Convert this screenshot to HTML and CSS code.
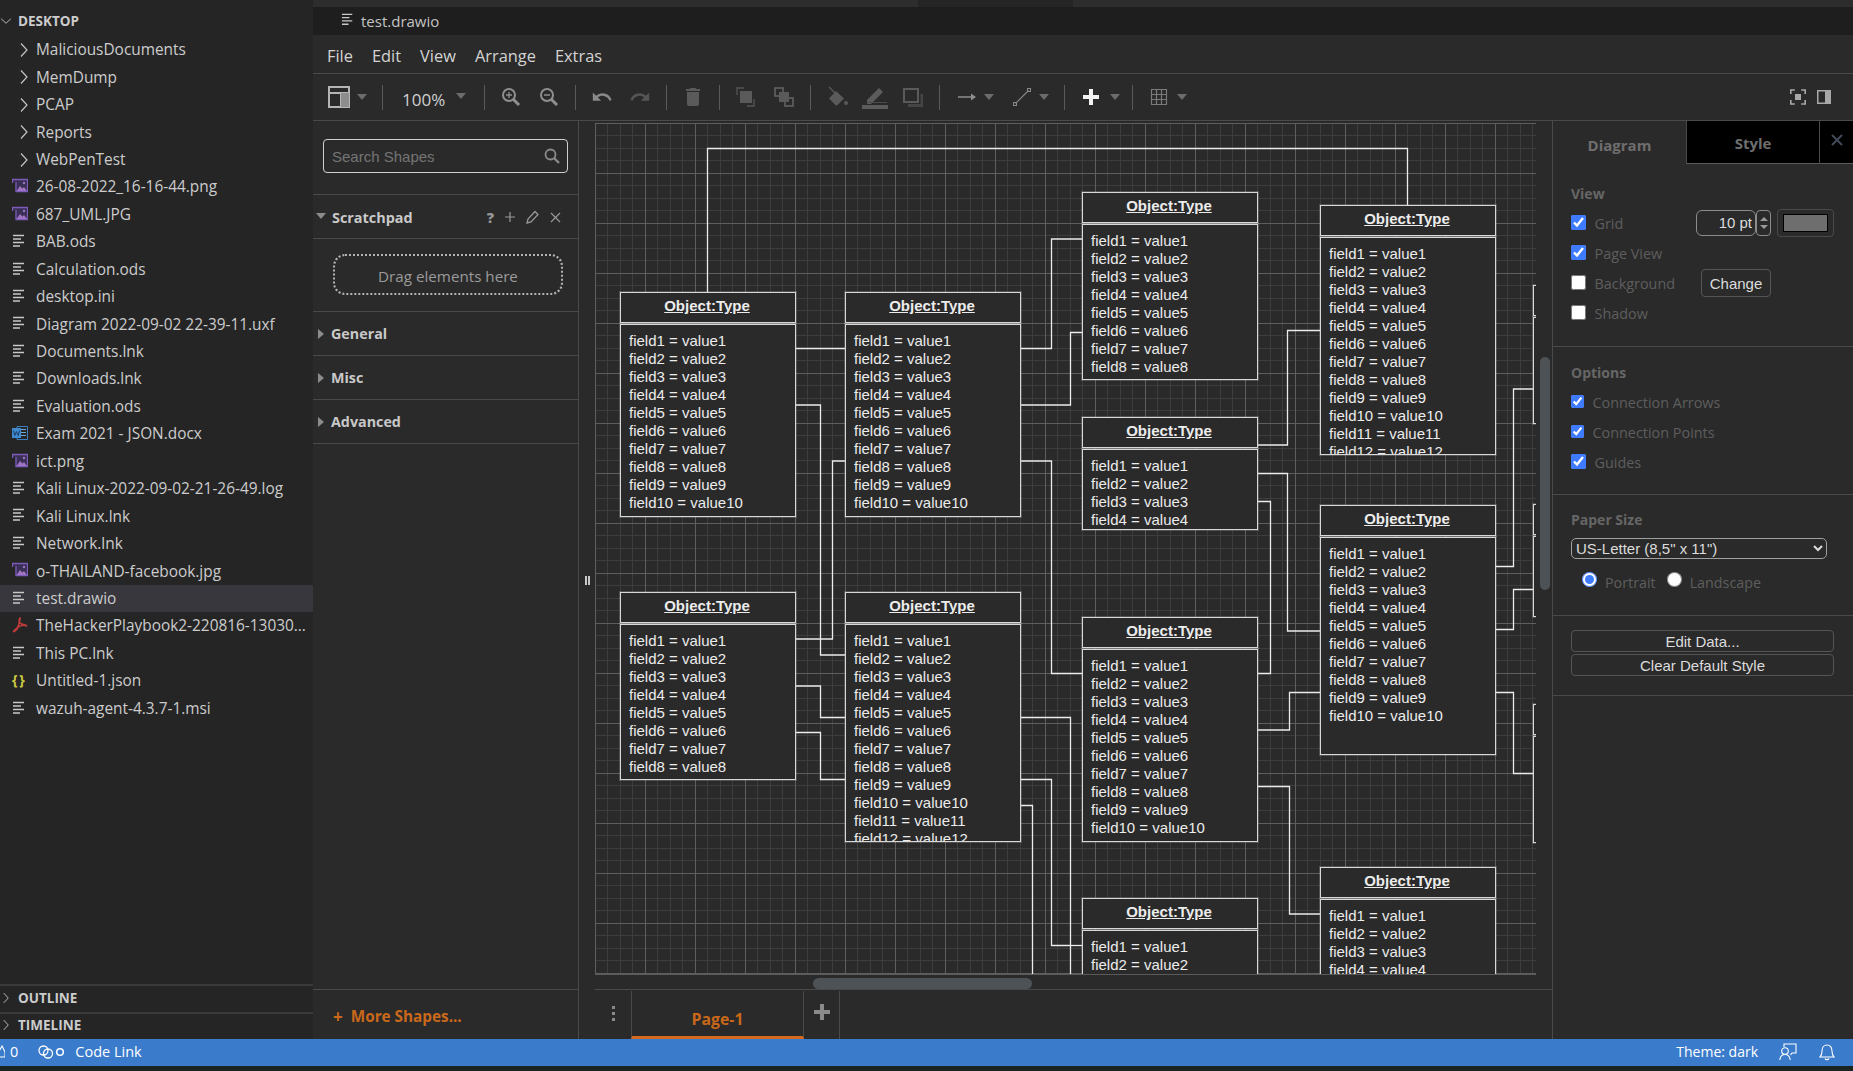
FILE: index.html
```html
<!DOCTYPE html>
<html lang="en">
<head>
  <meta charset="UTF-8" />
  <title>test.drawio - Visual Studio Code</title>
  <link rel="stylesheet" href="styles.css">
</head>
<body>
  <svg class="sprite" width="0" height="0">
    <symbol id="i-file" viewBox="0 0 16 16">
      <path d="M1 2.5h11M1 6h8M1 9.5h11M1 13h7" stroke="#c8c8c8" stroke-width="1.5" fill="none"/>
    </symbol>
    <symbol id="i-image" viewBox="0 0 16 16">
      <path d="M.5 1.5h15v12H3.5V4H.5z" fill="#3a2f55"/>
      <path d="M.5 5V1.5h15v12H4V4" stroke="#7d5bb8" stroke-width="1.3" fill="none"/>
      <path d="M4.5 13l3.5-5 2.5 2.5 1.5-1.5 3 4z" fill="#a074c4"/>
      <circle cx="12" cy="5" r="1.2" fill="#a074c4"/>
    </symbol>
    <symbol id="i-word" viewBox="0 0 16 16">
      <path d="M5 1.5h10.500v13H5z" fill="none" stroke="#3c7dbd"/>
      <path d="M9 4.5h5M9 7.5h5M9 10.5h5" stroke="#6ea6da"/>
      <rect x="0" y="3" width="9" height="10" fill="#3f8ad0"/>
      <path d="M1.5 5.5l1.3 5 1.7-4 1.7 4 1.3-5" stroke="#1d3f63" fill="none"/>
    </symbol>
    <symbol id="i-pdf" viewBox="0 0 16 16">
      <path d="M8 1c-1.5 0 0 5-2 8.5S1 13.5 1.5 14.5s3-1.5 4.500-4 7-2.500 8.500-1.500c.5-1.500-5.500-1-7-3.500C7 4 9 1 8 1z" fill="none" stroke="#c23b3b" stroke-width="1.5"/>
    </symbol>
    <symbol id="i-chev" viewBox="0 0 16 16">
      <path d="M5 1.5l6 6.500-6 6.500" stroke="#c5c5c5" stroke-width="1.2" fill="none"/>
    </symbol>
  </svg>

  <div class="app">
    <div class="main">

      <aside class="sidebar">
        <div class="explorer-head">
          <svg class="chev-down" viewBox="0 0 16 16"><path d="M1.5 5l6.500 6 6.500-6" stroke="#c5c5c5" stroke-width="1.2" fill="none"/></svg>
          <span>DESKTOP</span>
        </div>
        <div class="row"><svg class="chev"><use href="#i-chev"/></svg><span>MaliciousDocuments</span></div>
        <div class="row"><svg class="chev"><use href="#i-chev"/></svg><span>MemDump</span></div>
        <div class="row"><svg class="chev"><use href="#i-chev"/></svg><span>PCAP</span></div>
        <div class="row"><svg class="chev"><use href="#i-chev"/></svg><span>Reports</span></div>
        <div class="row"><svg class="chev"><use href="#i-chev"/></svg><span>WebPenTest</span></div>
        <div class="row"><svg class="ficon"><use href="#i-image"/></svg><span>26-08-2022_16-16-44.png</span></div>
        <div class="row"><svg class="ficon"><use href="#i-image"/></svg><span>687_UML.JPG</span></div>
        <div class="row"><svg class="ficon"><use href="#i-file"/></svg><span>BAB.ods</span></div>
        <div class="row"><svg class="ficon"><use href="#i-file"/></svg><span>Calculation.ods</span></div>
        <div class="row"><svg class="ficon"><use href="#i-file"/></svg><span>desktop.ini</span></div>
        <div class="row"><svg class="ficon"><use href="#i-file"/></svg><span>Diagram 2022-09-02 22-39-11.uxf</span></div>
        <div class="row"><svg class="ficon"><use href="#i-file"/></svg><span>Documents.lnk</span></div>
        <div class="row"><svg class="ficon"><use href="#i-file"/></svg><span>Downloads.lnk</span></div>
        <div class="row"><svg class="ficon"><use href="#i-file"/></svg><span>Evaluation.ods</span></div>
        <div class="row"><svg class="ficon"><use href="#i-word"/></svg><span>Exam 2021 - JSON.docx</span></div>
        <div class="row"><svg class="ficon"><use href="#i-image"/></svg><span>ict.png</span></div>
        <div class="row"><svg class="ficon"><use href="#i-file"/></svg><span>Kali Linux-2022-09-02-21-26-49.log</span></div>
        <div class="row"><svg class="ficon"><use href="#i-file"/></svg><span>Kali Linux.lnk</span></div>
        <div class="row"><svg class="ficon"><use href="#i-file"/></svg><span>Network.lnk</span></div>
        <div class="row"><svg class="ficon"><use href="#i-image"/></svg><span>o-THAILAND-facebook.jpg</span></div>
        <div class="row selected"><svg class="ficon"><use href="#i-file"/></svg><span>test.drawio</span></div>
        <div class="row"><svg class="ficon"><use href="#i-pdf"/></svg><span>TheHackerPlaybook2-220816-13030...</span></div>
        <div class="row"><svg class="ficon"><use href="#i-file"/></svg><span>This PC.lnk</span></div>
        <div class="row"><span class="json-icon">{ }</span><span>Untitled-1.json</span></div>
        <div class="row"><svg class="ficon"><use href="#i-file"/></svg><span>wazuh-agent-4.3.7-1.msi</span></div>

        <div class="side-section first"><svg class="chev-s"><use href="#i-chev"/></svg>OUTLINE</div>
        <div class="side-section"><svg class="chev-s"><use href="#i-chev"/></svg>TIMELINE</div>
      </aside>

      <div class="editor">
        <div class="tabstrip">
          <div class="strip-a"></div>
          <div class="strip-b"></div>
          <div class="strip-c"></div>
        </div>
        <div class="crumb">
          <svg class="ficon"><use href="#i-file"/></svg>
          <span>test.drawio</span>
        </div>
        <nav class="menubar">
          <span>File</span><span>Edit</span><span>View</span><span>Arrange</span><span>Extras</span>
        </nav>

        <div class="toolbar">
          <div class="tb-drop tb-first">
            <svg width="24" height="24" viewBox="0 0 24 24"><rect x="2" y="2" width="20" height="20" fill="none" stroke="#b5b5b5" stroke-width="2"/><path d="M2 8h20M14 8v14" stroke="#b5b5b5" stroke-width="2"/><rect x="14" y="8" width="8" height="14" fill="#8d8d8d"/></svg>
            <i class="caret"></i>
          </div>
          <i class="sep"></i>
          <div class="tb-zoom"><span>100%</span><i class="caret"></i></div>
          <i class="sep"></i>
          <div class="tb-btn"><svg width="20" height="20" viewBox="0 0 20 20"><circle cx="8" cy="8" r="6" fill="none" stroke="#8f8f8f" stroke-width="2"/><path d="M12.5 12.5l5.5 5.5" stroke="#8f8f8f" stroke-width="3"/><path d="M5 8h6M8 5v6" stroke="#8f8f8f" stroke-width="1.3"/></svg></div>
          <div class="tb-btn"><svg width="20" height="20" viewBox="0 0 20 20"><circle cx="8" cy="8" r="6" fill="none" stroke="#8f8f8f" stroke-width="2"/><path d="M12.5 12.5l5.5 5.5" stroke="#8f8f8f" stroke-width="3"/><path d="M5 8h6" stroke="#8f8f8f" stroke-width="1.5"/></svg></div>
          <i class="sep"></i>
          <div class="tb-btn"><svg width="22" height="22" viewBox="0 0 24 24"><path fill="#8a8a8a" d="M12.5 8c-2.65 0-5.05.99-6.9 2.6L2 7v9h9l-3.62-3.62c1.39-1.16 3.16-1.88 5.12-1.88 3.54 0 6.55 2.31 7.6 5.5l2.37-.78C21.08 11.03 17.15 8 12.5 8z"/></svg></div>
          <div class="tb-btn"><svg width="22" height="22" viewBox="0 0 24 24"><path fill="#555" d="M18.4 10.6C16.55 8.99 14.15 8 11.5 8c-4.65 0-8.58 3.03-9.96 7.22L3.9 16c1.05-3.19 4.05-5.5 7.6-5.5 1.95 0 3.73.72 5.12 1.88L13 16h9V7l-3.6 3.6z"/></svg></div>
          <i class="sep"></i>
          <div class="tb-btn"><svg width="24" height="24" viewBox="0 0 24 24"><path fill="#5a5a5a" d="M6 19c0 1.1.9 2 2 2h8c1.1 0 2-.9 2-2V7H6v12zM19 4h-3.5l-1-1h-5l-1 1H5v2h14V4z"/></svg></div>
          <i class="sep"></i>
          <div class="tb-btn"><svg width="20" height="20" viewBox="0 0 20 20"><path d="M1 8V1h7M11 19h7v-7" fill="none" stroke="#555" stroke-width="1.3"/><rect x="4" y="4" width="12" height="12" fill="#5a5a5a"/></svg></div>
          <div class="tb-btn"><svg width="20" height="20" viewBox="0 0 20 20"><rect x="1" y="1" width="8" height="8" fill="none" stroke="#666" stroke-width="1.5"/><rect x="11" y="11" width="8" height="8" fill="none" stroke="#666" stroke-width="1.5"/><rect x="5" y="5" width="10" height="10" fill="#5a5a5a"/></svg></div>
          <i class="sep"></i>
          <div class="tb-btn"><svg width="22" height="22" viewBox="0 0 22 22"><path fill="#5a5a5a" d="M10 5l8 7.5-6.5 6.5a1.5 1.5 0 0 1-2.1 0L3 12.5z"/><path d="M3 1l8 8" stroke="#5a5a5a" stroke-width="1.2"/><circle cx="20" cy="17" r="2" fill="#5a5a5a"/></svg></div>
          <div class="tb-btn"><svg width="26" height="24" viewBox="0 0 26 24"><path fill="#5c5c5c" d="M5 15l12-12 4 4-12 12H5z"/><rect x="0" y="20" width="26" height="4" fill="#5c5c5c"/><path d="M5 17.5h20" stroke="#4a4a4a"/></svg></div>
          <div class="tb-btn"><svg width="20" height="20" viewBox="0 0 20 20"><path d="M5 18.5h14V7" fill="none" stroke="#454545" stroke-width="3"/><rect x="1" y="2" width="14" height="13" fill="#2a2a2a" stroke="#5a5a5a" stroke-width="2"/></svg></div>
          <i class="sep"></i>
          <div class="tb-drop">
            <svg width="20" height="12" viewBox="0 0 20 12"><path d="M1 6h15" stroke="#8f8f8f" stroke-width="1.5"/><path d="M14 2.5l5 3.5-5 3.500z" fill="#8f8f8f"/></svg>
            <i class="caret"></i>
          </div>
          <div class="tb-drop">
            <svg width="20" height="20" viewBox="0 0 20 20"><path d="M3.5 16.5l13-13" stroke="#888" stroke-width="1.2"/><rect x="1.5" y="15.5" width="3" height="3" fill="none" stroke="#888"/><rect x="15.5" y="1.5" width="3" height="3" fill="none" stroke="#888"/></svg>
            <i class="caret"></i>
          </div>
          <i class="sep"></i>
          <div class="tb-drop tb-plus">
            <svg width="18" height="18" viewBox="0 0 18 18"><path d="M9 1v16M1 9h16" stroke="#f2f2f2" stroke-width="4"/></svg>
            <i class="caret"></i>
          </div>
          <i class="sep"></i>
          <div class="tb-drop tb-table">
            <svg width="18" height="18" viewBox="0 0 18 18"><path d="M1.5 1.5h15v15h-15zM6.5 1.5v15M11.5 1.500v15M1.5 6.5h15M1.5 11.5h15" fill="none" stroke="#7a7a7a" stroke-width="1.2"/></svg>
            <i class="caret"></i>
          </div>
          <div class="tb-right">
            <svg width="16" height="16" viewBox="0 0 16 16"><path d="M.8 5V1h4M11.2 1h4v4M15.2 11v4h-4M4.8 15h-4v-4" fill="none" stroke="#a8a8a8" stroke-width="1.6"/><rect x="5" y="5" width="6" height="6" fill="#a8a8a8"/></svg>
            <svg width="14" height="14" viewBox="0 0 14 14"><rect x=".75" y=".75" width="12.5" height="12.5" fill="none" stroke="#a8a8a8" stroke-width="1.5"/><rect x="8" y="1" width="5" height="12" fill="#a8a8a8"/></svg>
          </div>
        </div>

        <div class="workspace">
          <section class="shapes">
            <div class="search-wrap">
              <div class="search">
                <span>Search Shapes</span>
                <svg width="16" height="16" viewBox="0 0 16 16"><circle cx="6.5" cy="6.5" r="5" fill="none" stroke="#8a8a8a" stroke-width="1.8"/><path d="M10 10l5 5" stroke="#8a8a8a" stroke-width="2.4"/></svg>
              </div>
            </div>
            <div class="pad-head">
              <i class="tri-down"></i>
              <span class="pad-title">Scratchpad</span>
              <span class="pad-tools">
                <b>?</b>
                <svg width="12" height="12" viewBox="0 0 12 12"><path d="M6 1v10M1 6h10" stroke="#999" stroke-width="1.2"/></svg>
                <svg width="14" height="14" viewBox="0 0 14 14"><path d="M1 13l1-4 7-7.5 3 3L5 12z" fill="none" stroke="#999" stroke-width="1.3"/></svg>
                <svg width="11" height="11" viewBox="0 0 11 11"><path d="M1 1l9 9M10 1l-9 9" stroke="#999" stroke-width="1.2"/></svg>
              </span>
            </div>
            <div class="pad-body"><div class="dropzone">Drag elements here</div></div>
            <div class="group"><i class="tri-right"></i>General</div>
            <div class="group"><i class="tri-right"></i>Misc</div>
            <div class="group"><i class="tri-right"></i>Advanced</div>
            <div class="more-shapes"><span class="more-plus">+</span>More Shapes...</div>
          </section>

          <div class="splitter"><i></i><i></i></div>

          <section class="center">
            <div class="canvas-wrap">
              <div class="grid">
                <svg class="links" width="941" height="851" viewBox="595 123 941 851">
                  <g fill="none" stroke="#ececec" stroke-width="1.3">
                    <path d="M707.5 292V148.5H1407.5V205"/>
                    <path d="M795 348.5H845"/>
                    <path d="M795 405H820.5V655H845"/>
                    <path d="M845 461H832.5V639H795"/>
                    <path d="M1020 348.5H1051.5V239H1082"/>
                    <path d="M1020 405H1070.5V332.5H1082"/>
                    <path d="M1020 461H1051.5V673.5H1082"/>
                    <path d="M795 686H820.5V717.5H845"/>
                    <path d="M795 732.5H820.5V779.5H845"/>
                    <path d="M1020 717.5H1070.5V974"/>
                    <path d="M1070.5 945.5H1082"/>
                    <path d="M1020 779.5H1051.5V945.5H1070"/>
                    <path d="M1020 805.5H1032.5V974"/>
                    <path d="M1258 445H1287.5V330.5H1320"/>
                    <path d="M1258 473.5H1287.5V631H1320"/>
                    <path d="M1258 501.5H1270.5V673.5H1258"/>
                    <path d="M1258 730H1289.5V692.5H1320"/>
                    <path d="M1258 786.5H1289.5V914H1320"/>
                    <path d="M1495 566.5H1513.5V389H1533"/>
                    <path d="M1495 629.5H1513.5V589.5H1533"/>
                    <path d="M1495 692.5H1513.5V773.5H1533"/>
                  </g>
                </svg>

                <div class="node node-a">
                  <div class="node-title">Object:Type</div>
                  <div class="node-body">field1 = value1<br>field2 = value2<br>field3 = value3<br>field4 = value4<br>field5 = value5<br>field6 = value6<br>field7 = value7<br>field8 = value8<br>field9 = value9<br>field10 = value10</div>
                </div>
                <div class="node node-b">
                  <div class="node-title">Object:Type</div>
                  <div class="node-body">field1 = value1<br>field2 = value2<br>field3 = value3<br>field4 = value4<br>field5 = value5<br>field6 = value6<br>field7 = value7<br>field8 = value8<br>field9 = value9<br>field10 = value10</div>
                </div>
                <div class="node node-c">
                  <div class="node-title">Object:Type</div>
                  <div class="node-body">field1 = value1<br>field2 = value2<br>field3 = value3<br>field4 = value4<br>field5 = value5<br>field6 = value6<br>field7 = value7<br>field8 = value8</div>
                </div>
                <div class="node node-d">
                  <div class="node-title">Object:Type</div>
                  <div class="node-body">field1 = value1<br>field2 = value2<br>field3 = value3<br>field4 = value4<br>field5 = value5<br>field6 = value6<br>field7 = value7<br>field8 = value8<br>field9 = value9<br>field10 = value10<br>field11 = value11<br>field12 = value12</div>
                </div>
                <div class="node node-e">
                  <div class="node-title">Object:Type</div>
                  <div class="node-body">field1 = value1<br>field2 = value2<br>field3 = value3<br>field4 = value4<br>field5 = value5<br>field6 = value6<br>field7 = value7<br>field8 = value8</div>
                </div>
                <div class="node node-f">
                  <div class="node-title">Object:Type</div>
                  <div class="node-body">field1 = value1<br>field2 = value2<br>field3 = value3<br>field4 = value4</div>
                </div>
                <div class="node node-g">
                  <div class="node-title">Object:Type</div>
                  <div class="node-body">field1 = value1<br>field2 = value2<br>field3 = value3<br>field4 = value4<br>field5 = value5<br>field6 = value6<br>field7 = value7<br>field8 = value8<br>field9 = value9<br>field10 = value10</div>
                </div>
                <div class="node node-h">
                  <div class="node-title">Object:Type</div>
                  <div class="node-body">field1 = value1<br>field2 = value2</div>
                </div>
                <div class="node node-i">
                  <div class="node-title">Object:Type</div>
                  <div class="node-body">field1 = value1<br>field2 = value2<br>field3 = value3<br>field4 = value4<br>field5 = value5<br>field6 = value6<br>field7 = value7<br>field8 = value8<br>field9 = value9<br>field10 = value10<br>field11 = value11<br>field12 = value12</div>
                </div>
                <div class="node node-j">
                  <div class="node-title">Object:Type</div>
                  <div class="node-body">field1 = value1<br>field2 = value2<br>field3 = value3<br>field4 = value4<br>field5 = value5<br>field6 = value6<br>field7 = value7<br>field8 = value8<br>field9 = value9<br>field10 = value10</div>
                </div>
                <div class="node node-k">
                  <div class="node-title">Object:Type</div>
                  <div class="node-body">field1 = value1<br>field2 = value2<br>field3 = value3<br>field4 = value4</div>
                </div>
                <div class="node node-l"><div class="node-title"></div><div class="node-body"></div></div>
                <div class="node node-m"><div class="node-title"></div><div class="node-body"></div></div>
                <div class="node node-n"><div class="node-title"></div><div class="node-body"></div></div>
              </div>
              <div class="vscroll"></div>
              <div class="hscroll"></div>
            </div>

            <div class="pages">
              <div class="page-dots"><i></i><i></i><i></i></div>
              <div class="page-tab">Page-1</div>
              <div class="page-add"><svg width="16" height="16" viewBox="0 0 16 16"><path d="M8 0v16M0 8h16" stroke="#8a8a8a" stroke-width="4"/></svg></div>
            </div>
          </section>

          <section class="format">
            <div class="format-tabs">
              <div class="ftab">Diagram</div>
              <div class="ftab active">Style</div>
              <div class="ftab-close"><svg width="12" height="12" viewBox="0 0 12 12"><path d="M1 1l10 10M11 1L1 11" stroke="#404a58" stroke-width="2"/></svg></div>
            </div>

            <div class="fsec fsec-view">
              <div class="fsec-title">View</div>
              <div class="frow">
                <label class="fcheck"><input type="checkbox" checked>Grid</label>
                <div class="pt-input">10 pt</div>
                <div class="spinner"><i class="up"></i><i class="down"></i></div>
                <div class="swatch"><i></i></div>
              </div>
              <div class="frow"><label class="fcheck"><input type="checkbox" checked>Page View</label></div>
              <div class="frow">
                <label class="fcheck"><input type="checkbox">Background</label>
                <button class="btn-change">Change</button>
              </div>
              <div class="frow"><label class="fcheck"><input type="checkbox">Shadow</label></div>
            </div>

            <div class="fsec fsec-options">
              <div class="fsec-title">Options</div>
              <div class="frow"><label class="fcheck"><input type="checkbox" checked>Connection Arrows</label></div>
              <div class="frow"><label class="fcheck"><input type="checkbox" checked>Connection Points</label></div>
              <div class="frow"><label class="fcheck"><input type="checkbox" checked>Guides</label></div>
            </div>

            <div class="fsec fsec-paper">
              <div class="fsec-title">Paper Size</div>
              <select class="paper-select"><option>US-Letter (8,5" x 11")</option></select>
              <div class="radios">
                <label class="fradio"><input type="radio" name="orient" checked>Portrait</label>
                <label class="fradio"><input type="radio" name="orient">Landscape</label>
              </div>
            </div>

            <div class="fsec fsec-actions">
              <button class="btn-wide">Edit Data...</button>
              <button class="btn-wide">Clear Default Style</button>
            </div>
          </section>
        </div>
      </div>
    </div>

    <footer class="statusbar">
      <div class="st-left">
        <svg class="st-warn" width="5" height="13" viewBox="0 0 5 13"><path d="M-4 12L2 1l3 6v5z" fill="none" stroke="#fff" stroke-width="1.1"/></svg>
        <span class="st-zero">0</span>
        <svg class="st-link" width="28" height="14" viewBox="0 0 28 14"><circle cx="5.5" cy="5.5" r="4.5" fill="none" stroke="#fff" stroke-width="1.3"/><circle cx="10" cy="8.5" r="4.5" fill="none" stroke="#fff" stroke-width="1.3"/><circle cx="22" cy="7" r="3.3" fill="none" stroke="#fff" stroke-width="1.5"/></svg>
        <span>Code Link</span>
      </div>
      <div class="st-right">
        <span>Theme: dark</span>
        <svg class="st-feedback" width="18" height="18" viewBox="0 0 18 18"><path d="M5 4V1h12v9h-4l-1.500 2" fill="none" stroke="#fff" stroke-width="1.1"/><circle cx="6" cy="8" r="3.3" fill="none" stroke="#fff" stroke-width="1.1"/><path d="M.8 17c.4-3.5 2.5-5.5 5.2-5.5s4.800 2 5.200 5.500" fill="none" stroke="#fff" stroke-width="1.1"/></svg>
        <svg class="st-bell" width="16" height="18" viewBox="0 0 16 18"><path d="M1 14c1.500-1.500 2-3 2-6 0-3.500 2-6 5-6s5 2.500 5 6c0 3 .5 4.500 2 6z" fill="none" stroke="#fff" stroke-width="1.1"/><path d="M6 15.5c.5 1.500 3.500 1.500 4 0" fill="none" stroke="#fff" stroke-width="1.1"/></svg>
      </div>
    </footer>
    <div class="bottom-edge"></div>
  </div>
</body>
</html>
```

FILE: styles.css
```css
* {
  box-sizing: border-box;
}

html, body {
  height: 100%;
  margin: 0;
  background: #2a2a2a;
  overflow: hidden;
  font-family: 'Open Sans', 'Noto Sans', sans-serif;
}

.sprite {
  position: absolute;
}

.app {
  display: flex;
  flex-direction: column;
  width: 1853px;
  height: 1071px;
}

.main {
  display: flex;
  flex: 1;
  min-height: 0;
}

/* explorer */
.sidebar {
  display: flex;
  flex-direction: column;
  width: 313px;
  background: #252526;
  color: #cccccc;
  font-size: 15.4px;
}

.explorer-head {
  display: flex;
  align-items: center;
  height: 36px;
  padding: 6px 0 0 0;
  font-size: 13.5px;
  font-weight: 700;
}

.chev-down {
  width: 12px;
  height: 12px;
  margin-right: 6px;
}

.row {
  display: flex;
  align-items: center;
  flex: 0 0 27.45px;
  padding-left: 36px;
  position: relative;
  white-space: nowrap;
}

.row.selected {
  background: #37373d;
}

.chev {
  position: absolute;
  left: 16px;
  top: 6px;
  width: 16px;
  height: 16px;
}

.ficon {
  position: absolute;
  left: 12px;
  top: 5px;
  width: 16px;
  height: 16px;
}

.json-icon {
  position: absolute;
  left: 12px;
  top: 3px;
  color: #cbcb41;
  font-size: 14px;
  font-weight: 700;
  letter-spacing: -1px;
}

.side-section {
  display: flex;
  align-items: center;
  height: 27.5px;
  padding-bottom: 2px;
  border-top: 2px solid #3a3a3b;
  font-size: 13.5px;
  font-weight: 700;
}

.side-section.first {
  margin-top: auto;
}

.chev-s {
  width: 12px;
  height: 16px;
  margin-right: 6px;
}

/* editor chrome */
.editor {
  display: flex;
  flex-direction: column;
  flex: 1;
  min-width: 0;
  background: #2a2a2a;
}

.tabstrip {
  display: flex;
  height: 7px;
}

.strip-a {
  width: 605px;
  background: #2d2d2d;
}

.strip-b {
  width: 155px;
  background: #252526;
}

.strip-c {
  flex: 1;
  background: #2d2d2d;
}

.crumb {
  position: relative;
  display: flex;
  align-items: center;
  height: 28px;
  padding-left: 48px;
  background: #1e1e1e;
  color: #c4c4c4;
  font-size: 15px;
}

.crumb .ficon {
  left: 28px;
  top: 5px;
  width: 15px;
  height: 15px;
}

.menubar {
  display: flex;
  align-items: center;
  gap: 19px;
  height: 39px;
  padding: 2px 0 0 14px;
  border-bottom: 1px solid #4a4a4a;
  color: #d4d4d4;
  font-size: 16.4px;
}

.toolbar {
  display: flex;
  align-items: center;
  height: 47px;
  padding-left: 7px;
  border-bottom: 1px solid #4a4a4a;
}

.sep {
  flex: 0 0 15px;
  height: 25px;
  background: linear-gradient(#5a5a5a, #5a5a5a) center / 1px 100% no-repeat;
}

.caret {
  display: block;
  width: 0;
  height: 0;
  border-left: 5.5px solid transparent;
  border-right: 5.5px solid transparent;
  border-top: 6px solid #6c6c6c;
}

.tb-btn {
  display: flex;
  align-items: center;
  justify-content: center;
  flex: 0 0 38px;
}

.tb-drop {
  display: flex;
  align-items: center;
  flex: 0 0 55px;
  gap: 7px;
  padding-left: 10px;
}

.tb-first {
  padding-left: 7px;
  gap: 6px;
}

.tb-plus {
  flex-basis: 53px;
  gap: 10px;
}

.tb-table {
  gap: 9px;
}

.tb-zoom {
  display: flex;
  align-items: center;
  flex: 0 0 87px;
  gap: 11px;
  padding: 5px 0 0 12px;
  color: #d0d0d0;
  font-size: 17px;
}

.tb-zoom .caret {
  margin-top: -7px;
}

.tb-right {
  display: flex;
  align-items: center;
  gap: 11px;
  margin-left: auto;
  padding-right: 22px;
}

/* body of the drawio window */
.workspace {
  display: flex;
  flex: 1;
  min-height: 0;
}

.shapes {
  display: flex;
  flex-direction: column;
  flex: 0 0 265px;
}

.search-wrap {
  height: 74px;
  padding: 18px 10px 0;
  border-bottom: 1px solid #4a4a4a;
}

.search {
  display: flex;
  align-items: center;
  justify-content: space-between;
  height: 34px;
  padding: 0 7px 0 8px;
  border: 1px solid #cfcfcf;
  border-radius: 4px;
  color: #757575;
  font-family: 'Liberation Sans', Arial, sans-serif;
  font-size: 15px;
}

.pad-head {
  display: flex;
  align-items: center;
  height: 44px;
  padding: 1px 0 0 3px;
  border-bottom: 1px solid #4a4a4a;
  color: #c8c8c8;
  font-size: 14.4px;
  font-weight: 700;
}

.tri-down {
  width: 0;
  height: 0;
  margin: -2px 6px 0 0;
  border-left: 5px solid transparent;
  border-right: 5px solid transparent;
  border-top: 6px solid #8c8c8c;
}

.pad-tools {
  display: flex;
  align-items: center;
  gap: 10px;
  margin-left: auto;
  padding-right: 17px;
  color: #999;
}

.pad-body {
  height: 73px;
  padding: 15px 15px 0 20px;
  border-bottom: 1px solid #4a4a4a;
}

.dropzone {
  display: flex;
  align-items: center;
  justify-content: center;
  height: 41px;
  padding-top: 2px;
  border: 2px dotted #b4b4b4;
  border-radius: 12px;
  color: #9a9a9a;
  font-size: 15.2px;
}

.group {
  display: flex;
  align-items: center;
  height: 44px;
  padding-left: 5px;
  border-bottom: 1px solid #4a4a4a;
  color: #c8c8c8;
  font-size: 14.3px;
  font-weight: 700;
}

.tri-right {
  width: 0;
  height: 0;
  margin-right: 7px;
  border-top: 5px solid transparent;
  border-bottom: 5px solid transparent;
  border-left: 6px solid #8c8c8c;
}

.more-shapes {
  display: flex;
  align-items: center;
  height: 50px;
  margin-top: auto;
  padding: 3px 0 0 20px;
  border-top: 1px solid #4a4a4a;
  color: #c9681a;
  font-size: 15.3px;
  font-weight: 700;
}

.more-plus {
  margin-right: 8px;
  font-size: 17px;
}

.splitter {
  display: flex;
  align-items: center;
  justify-content: center;
  gap: 1px;
  flex: 0 0 17px;
  border-left: 1px solid #4a4a4a;
}

.splitter i {
  width: 2px;
  height: 9px;
  background: #c8c8c8;
}

/* canvas */
.center {
  display: flex;
  flex-direction: column;
  flex: 0 0 957px;
  min-width: 0;
}

.canvas-wrap {
  position: relative;
  flex: 1;
  padding-top: 2px;
  border-bottom: 1px solid #4a4a4a;
}

.grid {
  position: relative;
  width: 941px;
  height: 852px;
  overflow: hidden;
  border-bottom: 1px solid #5a5a5a;
  background-color: #2a2a2a;
  background-image:
    linear-gradient(to right, #5e5e5e 1px, transparent 1px),
    linear-gradient(to bottom, #5e5e5e 1px, transparent 1px),
    linear-gradient(to right, #3d3d3d 1px, transparent 1px 12px, #3d3d3d 12px 13px, transparent 13px 25px, #3d3d3d 25px 26px, transparent 26px 37px, #3d3d3d 37px 38px, transparent 38px),
    linear-gradient(to bottom, #3d3d3d 1px, transparent 1px 12px, #3d3d3d 12px 13px, transparent 13px 25px, #3d3d3d 25px 26px, transparent 26px 37px, #3d3d3d 37px 38px, transparent 38px);
  background-size: 50px 50px;
}

.links {
  position: absolute;
  left: 0;
  top: 0;
}

.vscroll {
  position: absolute;
  left: 945px;
  top: 236px;
  width: 10px;
  height: 233px;
  border-radius: 5px;
  background: #4d5257;
}

.hscroll {
  position: absolute;
  left: 218px;
  top: 857px;
  width: 219px;
  height: 11px;
  border-radius: 6px;
  background: #4d5257;
}

.node {
  position: absolute;
  display: flex;
  flex-direction: column;
  gap: 1px;
  width: 176px;
  color: #ececec;
  font-family: 'Liberation Sans', Arial, sans-serif;
  font-size: 15px;
  line-height: 18px;
}

.node-title {
  flex: 0 0 31px;
  padding: 4px 2px 0 0;
  border: 1px solid #d8d8d8;
  box-shadow: 0 0 0 1px rgba(200, 200, 200, 0.25);
  background: #2a2a2a;
  font-weight: 700;
  text-align: center;
  text-decoration: underline;
}

.node-body {
  flex: 1;
  min-height: 0;
  overflow: hidden;
  padding: 7px 0 0 8px;
  border: 1px solid #d8d8d8;
  box-shadow: 0 0 0 1px rgba(200, 200, 200, 0.25);
  background: #2a2a2a;
}

.node-a { left: 25px; top: 169px; height: 225px; }
.node-b { left: 250px; top: 169px; height: 225px; }
.node-c { left: 25px; top: 469px; height: 188px; }
.node-d { left: 250px; top: 469px; height: 250px; }
.node-e { left: 487px; top: 69px; height: 188px; }
.node-f { left: 487px; top: 294px; height: 113px; }
.node-g { left: 487px; top: 494px; height: 225px; }
.node-h { left: 487px; top: 775px; height: 225px; }
.node-i { left: 725px; top: 82px; height: 250px; }
.node-j { left: 725px; top: 382px; height: 250px; }
.node-k { left: 725px; top: 744px; height: 250px; }
.node-l { left: 938px; top: 162px; height: 139px; }
.node-m { left: 938px; top: 381px; height: 113px; }
.node-n { left: 938px; top: 581px; height: 139px; }

/* page tabs */
.pages {
  display: flex;
  align-items: stretch;
  flex: 0 0 49px;
  padding-top: 1px;
}

.page-dots {
  display: flex;
  flex-direction: column;
  align-items: center;
  justify-content: center;
  gap: 3px;
  flex: 0 0 36px;
  padding: 0 0 4px;
}

.page-dots i {
  width: 3px;
  height: 3px;
  background: #8a8a8a;
}

.page-tab {
  display: flex;
  align-items: center;
  justify-content: center;
  flex: 0 0 173px;
  padding-top: 10px;
  border-left: 1px solid #4a4a4a;
  border-right: 1px solid #4a4a4a;
  border-bottom: 3px solid #d2691e;
  color: #c9681a;
  font-size: 15.8px;
  font-weight: 700;
}

.page-add {
  display: flex;
  align-items: center;
  justify-content: center;
  flex: 0 0 36px;
  padding-bottom: 6px;
  border-right: 1px solid #4a4a4a;
}

/* format panel */
.format {
  display: flex;
  flex-direction: column;
  flex: 1;
  border-left: 1px solid #4a4a4a;
}

.format-tabs {
  display: flex;
  flex: 0 0 43px;
}

.ftab {
  display: flex;
  align-items: center;
  justify-content: center;
  flex: 0 0 133px;
  padding-top: 5px;
  color: #6e6e6e;
  font-size: 15px;
  font-weight: 700;
}

.ftab.active {
  flex: 0 0 133px;
  padding-top: 2px;
  background: #000;
  border-left: 1px solid #4a4a4a;
  border-bottom: 1px solid #5a5a5a;
}

.ftab-close {
  display: flex;
  align-items: center;
  justify-content: center;
  flex: 1;
  padding-bottom: 4px;
  background: #000;
  border-left: 1px solid #4a4a4a;
  border-bottom: 1px solid #5a5a5a;
}

.fsec {
  padding-left: 18px;
  border-bottom: 1px solid #4a4a4a;
}

.fsec-view {
  height: 183px;
  padding-top: 19px;
}

.fsec-options {
  height: 148px;
  padding-top: 15px;
}

.fsec-paper {
  height: 121px;
  padding-top: 14px;
}

.fsec-actions {
  display: flex;
  flex-direction: column;
  gap: 2px;
  height: 80px;
  padding-top: 14px;
  padding-right: 19px;
}

.fsec-title {
  height: 25px;
  color: #666;
  font-size: 14px;
  font-weight: 700;
  line-height: 22px;
}

.frow {
  display: flex;
  align-items: center;
  height: 30px;
}

.fcheck {
  display: flex;
  align-items: center;
  gap: 8.5px;
  width: 125px;
  color: #5e5e5e;
  font-size: 14.4px;
  white-space: nowrap;
}

.fcheck input {
  width: 15px;
  height: 15px;
  margin: -2px 0 0;
  accent-color: #3f7bff;
}

.pt-input {
  width: 60px;
  height: 26px;
  padding-right: 3px;
  border: 1px solid #8c8c8c;
  border-radius: 6px;
  color: #ddd;
  font-family: 'Liberation Sans', Arial, sans-serif;
  font-size: 15px;
  line-height: 24px;
  text-align: right;
}

.spinner {
  display: flex;
  flex-direction: column;
  justify-content: space-around;
  align-items: center;
  width: 15px;
  height: 26px;
  padding: 4px 0;
  border: 1px solid #8c8c8c;
  border-radius: 4px;
}

.spinner i {
  width: 0;
  height: 0;
  border-left: 4px solid transparent;
  border-right: 4px solid transparent;
}

.spinner .up {
  border-bottom: 4px solid #999;
}

.spinner .down {
  border-top: 4px solid #999;
}

.swatch {
  width: 57px;
  height: 28px;
  margin-left: 6px;
  padding: 4px 5px;
  border: 1px solid #4a4a4a;
  border-radius: 4px;
}

.swatch i {
  display: block;
  height: 18px;
  border: 1px solid #000;
  background: #6e6e6e;
}

button {
  border: 1px solid #555;
  border-radius: 4px;
  background: #2a2a2a;
  color: #dcdcdc;
  font-family: 'Liberation Sans', Arial, sans-serif;
  font-size: 15px;
  cursor: pointer;
}

.btn-change {
  width: 70px;
  height: 28px;
  margin-left: 5px;
  padding: 0;
}

.btn-wide {
  height: 22px;
  padding: 0;
}

.paper-select {
  display: block;
  width: 256px;
  height: 21px;
  margin-top: 4px;
  padding: 0;
  border: 1px solid #a0a0a0;
  border-radius: 5px;
  background-color: #2a2a2a;
  color: #dcdcdc;
  font-family: 'Liberation Sans', Arial, sans-serif;
  font-size: 15px;
}

.radios {
  display: flex;
  gap: 11px;
  margin-top: 14px;
  padding-left: 11px;
}

.fradio {
  display: flex;
  align-items: center;
  gap: 8px;
  color: #5e5e5e;
  font-size: 14.3px;
}

.fradio input {
  width: 15px;
  height: 15px;
  margin: -6px 0 0;
  accent-color: #3f7bff;
}

/* status bar */
.statusbar {
  display: flex;
  align-items: center;
  justify-content: space-between;
  flex: 0 0 27px;
  padding-bottom: 2px;
  background: #3a7bcb;
  color: #fff;
  font-size: 14.5px;
}

.st-left,
.st-right {
  display: flex;
  align-items: center;
}

.st-zero {
  margin: 0 20px 0 5px;
}

.st-link {
  margin-right: 9px;
}

.st-right {
  padding-right: 18px;
  font-size: 14px;
}

.st-feedback {
  margin-left: 21px;
}

.st-bell {
  margin-left: 22px;
}

.bottom-edge {
  flex: 0 0 5px;
  background: #1a2422;
}
```
